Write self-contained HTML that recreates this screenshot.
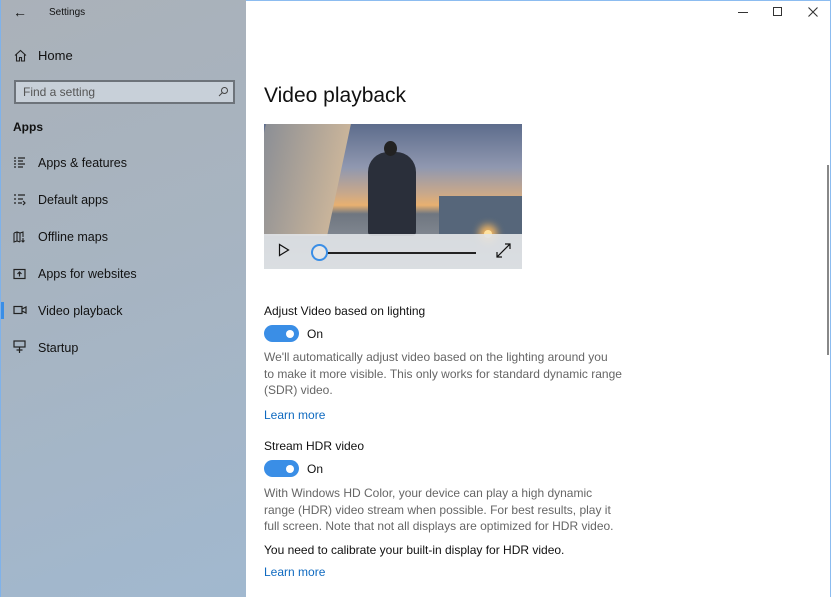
<!DOCTYPE html>
<html><head><style>
*{margin:0;padding:0;box-sizing:border-box}
body{width:831px;height:597px;overflow:hidden;font-family:"Liberation Sans",sans-serif;background:#fff;position:relative;color:#000}
.side{position:absolute;left:0;top:0;width:246px;height:597px;background:linear-gradient(160deg,#aab1b9 0%,#a7b4c1 45%,#a1b8cf 100%);border-left:1px solid #7fb2ea}
.t{position:absolute;font-size:12.5px;color:#111;white-space:nowrap}
.p{position:absolute;left:264px;font-size:12px;color:#666;line-height:16.5px;white-space:nowrap}
.lbl{position:absolute;left:264px;font-size:12px;color:#111;white-space:nowrap}
.lnk{position:absolute;left:264px;font-size:12px;color:#0f6ac0}
.tog{position:absolute;left:264px;width:35px;height:17px;border-radius:9px;background:#3a8ee6}
.tog:after{content:"";position:absolute;right:5px;top:4.5px;width:8px;height:8px;border-radius:50%;background:#fff}
</style></head><body>
<div style="position:absolute;left:0;top:0;width:831px;height:1px;background:#8cbcf0"></div>
<div style="position:absolute;right:0;top:0;width:1px;height:597px;background:#8cbcf0"></div>
<div class="side">
<div class="t" style="left:12px;top:4px;font-size:14px">←</div>
<div class="t" style="left:48px;top:7px;font-size:10px">Settings</div>
<svg style="position:absolute;left:13px;top:49px" width="13" height="13" viewBox="0 0 13 13" fill="none" stroke="#222" stroke-width="1.1"><path d="M1 6.5L6.5 1.5 12 6.5M2.5 5v7h3V8.5h2V12h3V5"/></svg>
<div class="t" style="left:37px;top:48px;font-size:13px">Home</div>
<div style="position:absolute;left:13px;top:80px;width:221px;height:24px;border:2px solid #6d737a;background:#c8d0d9"></div>
<div class="t" style="left:22px;top:85px;color:#555;font-size:12px">Find a setting</div>
<svg style="position:absolute;left:217px;top:86px" width="11" height="11" viewBox="0 0 11 11" fill="none" stroke="#444"><circle cx="6.5" cy="4.5" r="3"/><path d="M4.5 6.5L1 10"/></svg>
<div class="t" style="left:12px;top:120px;font-weight:bold;font-size:12px">Apps</div>
<svg style="position:absolute;left:12px;top:157px" width="13" height="12" viewBox="0 0 13 12" stroke="#222" stroke-width="1.2"><path d="M1 1h2M1 4h2M1 7h2M1 10h2M5 1h7M5 4h5M5 7h7M5 10h5"/></svg>
<div class="t" style="left:37px;top:156px">Apps &amp; features</div>
<svg style="position:absolute;left:12px;top:194px" width="13" height="12" viewBox="0 0 13 12" stroke="#222" stroke-width="1.2" fill="none"><path d="M1 1h2M1 5h2M1 9h2M5 1h7M5 5h5M5 9h4M10 7l2 2-2 2"/></svg>
<div class="t" style="left:37px;top:193px">Default apps</div>
<svg style="position:absolute;left:12px;top:231px" width="13" height="12" viewBox="0 0 13 12" stroke="#222" stroke-width="1.1" fill="none"><path d="M1 2l3-1 3 1 3-1v5M1 2v9l3-1 3 1M4 1v9M7 2v9M10 7v4M8.5 9.5L10 11l1.5-1.5"/></svg>
<div class="t" style="left:37px;top:230px">Offline maps</div>
<svg style="position:absolute;left:12px;top:268px" width="13" height="12" viewBox="0 0 13 12" stroke="#222" stroke-width="1.2" fill="none"><rect x="1" y="1.5" width="11" height="9"/><path d="M6.5 8.5V4M4.5 6l2-2 2 2"/></svg>
<div class="t" style="left:37px;top:267px">Apps for websites</div>
<div style="position:absolute;left:0;top:302px;width:3px;height:17px;background:#3a8ee6"></div>
<svg style="position:absolute;left:12px;top:305px" width="14" height="10" viewBox="0 0 14 10" stroke="#222" stroke-width="1.2" fill="none"><rect x="1" y="1.5" width="8" height="7"/><path d="M9 4l4-2v6l-4-2"/></svg>
<div class="t" style="left:37px;top:304px">Video playback</div>
<svg style="position:absolute;left:12px;top:340px" width="13" height="14" viewBox="0 0 13 14" stroke="#222" stroke-width="1.2" fill="none"><rect x="1" y="1" width="11" height="6"/><path d="M6.5 7v6M3.5 10h6"/></svg>
<div class="t" style="left:37px;top:341px">Startup</div>
</div>
<div style="position:absolute;left:738px;top:12px;width:10px;height:1px;background:#333"></div>
<div style="position:absolute;left:773px;top:7px;width:9px;height:9px;border:1px solid #333"></div>
<svg style="position:absolute;left:808px;top:7px" width="10" height="10" viewBox="0 0 10 10" stroke="#333" stroke-width="1.1"><path d="M0.5 0.5l9 9M9.5 0.5l-9 9"/></svg>
<div style="position:absolute;left:827px;top:165px;width:2px;height:190px;background:#888"></div>
<div style="position:absolute;left:264px;top:84px;font-size:21px;color:#111">Video playback</div>
<div style="position:absolute;left:264px;top:124px;width:258px;height:145px;overflow:hidden;background:linear-gradient(180deg,#5d6c8c 0%,#9098b0 30%,#c9a88a 48%,#e8b070 56%,#6f7680 62%,#9aa0a8 100%)">
<div style="position:absolute;left:-10px;top:0;width:85px;height:112px;background:linear-gradient(90deg,#8c8f95,#c9b49a);transform:skewX(-12deg)"></div>
<div style="position:absolute;left:175px;top:72px;width:83px;height:38px;background:#56667a"></div>
<div style="position:absolute;left:220px;top:106px;width:8px;height:8px;border-radius:50%;background:#ffe2a0;box-shadow:0 0 8px 5px #f8b860"></div>
<div style="position:absolute;left:104px;top:28px;width:48px;height:84px;border-radius:20px 20px 4px 4px;background:#2a2f3a"></div>
<div style="position:absolute;left:120px;top:17px;width:13px;height:15px;border-radius:50%;background:#222"></div>
<div style="position:absolute;left:0;top:110px;width:258px;height:35px;background:rgba(225,228,232,.9)"></div>
<svg style="position:absolute;left:14px;top:119px" width="12" height="14" viewBox="0 0 12 14" fill="none" stroke="#111" stroke-width="1.2"><path d="M1.5 1.5v11l9-5.5z"/></svg>
<div style="position:absolute;left:62px;top:128px;width:150px;height:1.5px;background:#222"></div>
<div style="position:absolute;left:47px;top:120px;width:17px;height:17px;border-radius:50%;background:#e6e6e6;border:2px solid #3a8ee6"></div>
<svg style="position:absolute;left:232px;top:119px" width="15" height="15" viewBox="0 0 15 15" fill="none" stroke="#111" stroke-width="1.2"><path d="M1 14L14 1M1 9v5h5M9 1h5v5"/></svg>
</div>
<div class="lbl" style="top:304px">Adjust Video based on lighting</div>
<div class="tog" style="top:325px"></div>
<div class="lbl" style="left:307px;top:327px">On</div>
<div class="p" style="top:349px">We'll automatically adjust video based on the lighting around you<br>to make it more visible. This only works for standard dynamic range<br>(SDR) video.</div>
<div class="lnk" style="top:408px">Learn more</div>
<div class="lbl" style="top:439px">Stream HDR video</div>
<div class="tog" style="top:460px"></div>
<div class="lbl" style="left:307px;top:462px">On</div>
<div class="p" style="top:485px">With Windows HD Color, your device can play a high dynamic<br>range (HDR) video stream when possible. For best results, play it<br>full screen. Note that not all displays are optimized for HDR video.</div>
<div class="lbl" style="top:543px">You need to calibrate your built-in display for HDR video.</div>
<div class="lnk" style="top:565px">Learn more</div>
</body></html>
